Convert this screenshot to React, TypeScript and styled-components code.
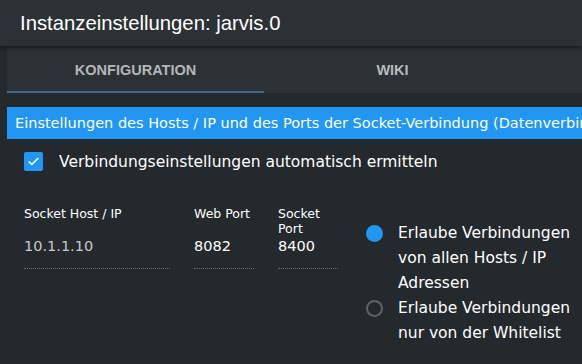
import React from "react";
import styled, { createGlobalStyle } from "styled-components";

const Global = createGlobalStyle`
  html, body { margin: 0; padding: 0; background: #23292d; overflow: hidden; }
  body { font-family: "DejaVu Sans", sans-serif; }
`;

const Page = styled.div`
  width: 582px;
  height: 364px;
  background: #23292d;
  display: flex;
  flex-direction: column;
  overflow: hidden;
`;

const Header = styled.div`
  height: 46px;
  flex: none;
  background: #2b3135;
  box-shadow: 0 2px 4px rgba(0,0,0,0.45);
  display: flex;
  align-items: center;
  padding-left: 20px;
  font-family: "Liberation Sans", Arial, sans-serif;
  font-size: 20.3px;
  color: #fff;
  position: relative;
  z-index: 1;
`;

const Body = styled.div`
  flex: 1;
  padding-left: 7px;
  display: flex;
  flex-direction: column;
  min-width: 0;
`;

const Tabs = styled.div`
  height: 47px;
  background: #2b3135;
  display: flex;
  flex: none;
`;

const Tab = styled.div<{ $active?: boolean }>`
  width: 257px;
  display: flex;
  align-items: center;
  justify-content: center;
  font-family: "Liberation Sans", Arial, sans-serif;
  font-weight: bold;
  font-size: 14.5px;
  color: ${p => (p.$active ? "#b3b6b8" : "#b9bcbe")};
  box-sizing: border-box;
  border-bottom: 2px solid ${p => (p.$active ? "#47698f" : "transparent")};
  padding-top: 2px;
`;

const Banner = styled.div`
  margin-top: 14px;
  height: 32px;
  flex: none;
  background: #2196f3;
  color: #fff;
  font-size: 14.5px;
  display: flex;
  align-items: center;
  padding-left: 8px;
  white-space: nowrap;
  overflow: hidden;
`;

const CheckRow = styled.label`
  display: flex;
  align-items: center;
  height: 42px;
  padding-top: 3px;
  box-sizing: border-box;
  padding-left: 17px;
  gap: 16px;
  color: #fff;
  font-size: 15.5px;
`;

const Box = styled.span`
  width: 19px;
  height: 19px;
  border-radius: 2px;
  background: #2196f3;
  display: flex;
  align-items: center;
  justify-content: center;
`;

const FormRow = styled.div`
  display: flex;
  padding-left: 17px;
  margin-top: 25px;
`;

const Field = styled.div<{ $w: number; $gap: number }>`
  width: ${p => p.$w}px;
  margin-right: ${p => p.$gap}px;
  display: flex;
  flex-direction: column;
`;

const Label = styled.div`
  font-size: 12.5px;
  color: #fff;
  line-height: 15px;
  height: 30px;
`;

const Value = styled.div<{ $dim?: boolean }>`
  font-size: 14.5px;
  color: ${p => (p.$dim ? "#c8c9ca" : "#fff")};
  height: 33px;
  box-sizing: border-box;
  border-bottom: 1px dotted #6b6f72;
  padding-top: 2px;
`;

const Radios = styled.div`
  margin-left: 28px;
  margin-top: 15px;
  display: flex;
  flex-direction: column;
`;

const RadioRow = styled.div`
  display: flex;
  align-items: flex-start;
  gap: 15px;
  color: #fff;
  font-size: 15.5px;
  line-height: 25px;
  width: 215px;
`;

const Dot = styled.span<{ $on?: boolean }>`
  flex: none;
  width: 17px;
  height: 17px;
  margin-top: 4px;
  border-radius: 50%;
  box-sizing: border-box;
  background: ${p => (p.$on ? "#2196f3" : "transparent")};
  border: ${p => (p.$on ? "none" : "2px solid #5e6367")};
`;

export default function App() {
  return (
    <Page>
      <Global />
      <Header>Instanzeinstellungen: jarvis.0</Header>
      <Body>
        <Tabs>
          <Tab $active>KONFIGURATION</Tab>
          <Tab>WIKI</Tab>
        </Tabs>
        <Banner>Einstellungen des Hosts / IP und des Ports der Socket-Verbindung (Datenverbindung)</Banner>
        <CheckRow>
          <Box>
            <svg width="13" height="13" viewBox="0 0 24 24" fill="none" stroke="#fff" strokeWidth="3" strokeLinecap="round" strokeLinejoin="round">
              <path d="M4 12.5l5 5L20 6.5" />
            </svg>
          </Box>
          Verbindungseinstellungen automatisch ermitteln
        </CheckRow>
        <FormRow>
          <Field $w={146} $gap={24}>
            <Label>Socket Host / IP</Label>
            <Value $dim>10.1.1.10</Value>
          </Field>
          <Field $w={60} $gap={24}>
            <Label>Web Port</Label>
            <Value>8082</Value>
          </Field>
          <Field $w={60} $gap={0}>
            <Label>Socket<br />Port</Label>
            <Value>8400</Value>
          </Field>
          <Radios>
            <RadioRow>
              <Dot $on />
              <span>Erlaube Verbindungen von allen Hosts / IP Adressen</span>
            </RadioRow>
            <RadioRow>
              <Dot />
              <span>Erlaube Verbindungen nur von der Whitelist</span>
            </RadioRow>
          </Radios>
        </FormRow>
      </Body>
    </Page>
  );
}
